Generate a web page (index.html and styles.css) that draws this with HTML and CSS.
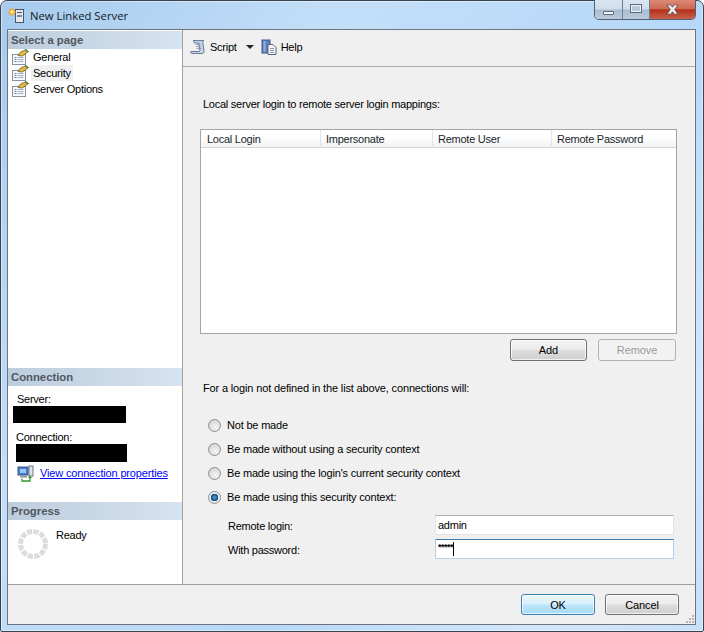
FILE: index.html
```html
<!DOCTYPE html>
<html lang="en">
<head>
<meta charset="utf-8">
<title>New Linked Server</title>
<link rel="stylesheet" href="styles.css">
</head>
<body>
<div class="window">
  <header class="titlebar">
    <svg class="title-icon" width="18" height="18" viewBox="0 0 18 18">
      <rect x="8.500" y="2.500" width="8" height="13" fill="#e4e8ee" stroke="#4a5566"/>
      <rect x="10" y="5" width="5" height="1" fill="#4a5566"/>
      <rect x="10" y="8" width="5" height="2" fill="#7e8aa0"/>
      <path d="M5 1l1 2 2-1-1 2 2 1-2 1 1 2-2-1-1 2-1-2-2 1 1-2-2-1 2-1-1-2 2 1z" fill="#f9c13a" stroke="#e8962a" stroke-width=".5"/>
      <circle cx="5" cy="5" r="1.300" fill="#fff3b0"/>
    </svg>
    <span class="title-text">New Linked Server</span>
    <div class="controls">
      <div class="ctl ctl-min"><span class="min-glyph"></span></div>
      <div class="ctl ctl-max"><span class="max-glyph"></span></div>
      <div class="ctl ctl-close">
        <svg width="15" height="11" viewBox="0 0 15 11"><path d="M2 .8h3.500l2 2.400 2-2.400H13l-3.300 4.700L13 10.200H9.500l-2-2.400-2 2.400H2l3.300-4.700z" fill="#eef0f4" stroke="#5a4a4a" stroke-width=".8"/></svg>
      </div>
    </div>
  </header>

  <div class="client">
    <div class="main">
      <aside class="sidebar">
        <section class="pages">
          <h2 class="group-head">Select a page</h2>
          <ul class="page-list">
            <li class="page-item">
              <svg class="page-icon" width="17" height="16" viewBox="0 0 17 16"><use href="#pg"/></svg>
              <span class="page-label">General</span>
            </li>
            <li class="page-item">
              <svg class="page-icon" width="17" height="16" viewBox="0 0 17 16"><use href="#pg"/></svg>
              <span class="page-label selected">Security</span>
            </li>
            <li class="page-item">
              <svg class="page-icon" width="17" height="16" viewBox="0 0 17 16"><use href="#pg"/></svg>
              <span class="page-label">Server Options</span>
            </li>
          </ul>
        </section>

        <section class="connection">
          <h2 class="group-head">Connection</h2>
          <div class="conn-label conn-label-1">Server:</div>
          <div class="redact redact-server"></div>
          <div class="conn-label conn-label-2">Connection:</div>
          <div class="redact redact-conn"></div>
          <div class="conn-link-row">
            <svg width="18" height="17" viewBox="0 0 18 17">
              <rect x="1" y="2" width="10" height="8" fill="#3f7fd8" stroke="#44557a"/>
              <rect x="3" y="4" width="6" height="4" fill="#9cc6f2"/>
              <rect x="3" y="10.500" width="7" height="2" fill="#8a94a8"/>
              <rect x="12" y="1" width="4" height="10" fill="#dfe3ea" stroke="#6a7488"/>
              <path d="M5 13.500v2.500h8v-4" fill="none" stroke="#2c9a2c" stroke-width="1.300"/>
              <path d="M11 13l2-2.500 2 2.500z" fill="#2c9a2c"/>
            </svg>
            <span class="link">View connection properties</span>
          </div>
        </section>

        <section class="progress">
          <h2 class="group-head">Progress</h2>
          <div class="progress-body">
            <svg class="spinner" width="32" height="32" viewBox="0 0 32 32">
              <circle cx="16" cy="16" r="12.500" fill="none" stroke="#dcdcdc" stroke-width="5" stroke-dasharray="5.200 1.350"/>
            </svg>
            <span class="ready">Ready</span>
          </div>
        </section>
      </aside>

      <div class="content">
        <div class="toolbar">
          <svg class="tb-icon" width="16" height="16" viewBox="0 0 16 16">
            <path d="M3 1.500h11c-1.500 1-1.500 2-1 3l1 7.500c.3 2-1 2.500-2 2.500H2c-1.200 0-1.700-1-1.200-2H9c1 0 1-.8.800-1.500L8.800 4H4.500L4 2.500C3.800 2 3.400 1.700 3 1.500z" fill="#c8d6e8" stroke="#5b7193" stroke-width=".9"/>
            <path d="M5.500 5.500h5M6 7.500h5M6.500 9.500h5" stroke="#7d93b2" stroke-width=".8"/>
          </svg>
          <span class="tb-text tb-script">Script</span>
          <span class="tb-arrow"></span>
          <svg class="tb-icon" width="16" height="16" viewBox="0 0 16 16">
            <rect x="1" y="1" width="8" height="13" fill="#5c7fb8" stroke="#3d5a8a"/>
            <rect x="2.500" y="2" width="2" height="11" fill="#8fb0de"/>
            <path d="M7 5.500h5l3 3v7H7z" fill="#f4f6f9" stroke="#56657d"/>
            <path d="M9 9.500h4M9 11.500h4M9 13.500h4" stroke="#8a96a8"/>
          </svg>
          <span class="tb-text">Help</span>
        </div>

        <div class="form">
          <p class="intro">Local server login to remote server login mappings:</p>

          <div class="listview">
            <div class="lv-head">
              <div class="lv-col lv-c1">Local Login</div>
              <div class="lv-col lv-c2">Impersonate</div>
              <div class="lv-col lv-c3">Remote User</div>
              <div class="lv-col lv-c4">Remote Password</div>
            </div>
          </div>

          <div class="list-buttons">
            <button class="btn btn-add" type="button">Add</button>
            <button class="btn btn-disabled" type="button">Remove</button>
          </div>

          <p class="notice">For a login not defined in the list above, connections will:</p>

          <div class="radios">
            <label class="radio-row"><span class="radio"></span>Not be made</label>
            <label class="radio-row"><span class="radio"></span>Be made without using a security context</label>
            <label class="radio-row"><span class="radio"></span>Be made using the login's current security context</label>
            <label class="radio-row"><span class="radio radio-on"></span>Be made using this security context:</label>
          </div>

          <div class="fields">
            <div class="field-row">
              <span class="field-label">Remote login:</span>
              <div class="input">admin</div>
            </div>
            <div class="field-row">
              <span class="field-label">With password:</span>
              <div class="input input-focus"><span class="pw">*****</span><span class="caret"></span></div>
            </div>
          </div>
        </div>
      </div>
    </div>

    <footer class="footer">
      <button class="btn btn-ok" type="button">OK</button>
      <button class="btn btn-cancel" type="button">Cancel</button>
      <svg class="grip" width="10" height="10" viewBox="0 0 10 10"><path d="M7 1h2v2H7zM4 4h2v2H4zM7 4h2v2H7zM1 7h2v2H1zM4 7h2v2H4zM7 7h2v2H7z" fill="#b8b8b8"/></svg>
    </footer>
  </div>
</div>

<svg class="defs" width="0" height="0">
  <defs>
    <g id="pg">
      <rect x=".5" y="5.500" width="13" height="10" fill="#f7f8fa" stroke="#8a8f98"/>
      <path d="M2.500 8.500h2M2.500 10.500h2M2.500 12.500h2" stroke="#6d7b92"/>
      <path d="M5.500 8.500h6M5.500 10.500h6M5.500 12.500h6" stroke="#9fb0ca"/>
      <path d="M6 6.500l2-3 6-3 2.500 2-6 4.500z" fill="#e9b93a" stroke="#4e4a28" stroke-width=".7"/>
      <path d="M13 1l3 2" stroke="#4c8f3f" stroke-width="1.200"/>
    </g>
  </defs>
</svg>
</body>
</html>
```

FILE: styles.css
```css
* { box-sizing: border-box; }
html, body { margin: 0; padding: 0; }
body {
  width: 704px;
  height: 632px;
  overflow: hidden;
  background: #fff;
  font-family: "Liberation Sans", Arial, sans-serif;
  font-size: 11px;
  letter-spacing: -.25px;
  color: #000;
}
.window {
  width: 704px;
  height: 632px;
  padding: 0 7px 6px 6px;
  display: flex;
  flex-direction: column;
  border: 1px solid #39424f;
  border-radius: 7px 7px 2px 2px;
  background: linear-gradient(125deg, #a6cbee 0%, #c3def8 30%, #b7d8f8 62%, #d2e7fb 85%, #c8e0f7 100%);
  box-shadow: inset 0 0 0 1px rgba(255,255,255,.45);
}
.titlebar {
  height: 28px;
  flex: none;
  display: flex;
  align-items: center;
}
.title-icon { flex: none; margin-top: 2px; }
.title-text {
  margin-left: 5px;
  margin-top: 1px;
  font-family: "Open Sans", sans-serif;
  font-size: 11.300px;
  letter-spacing: 0;
  color: #101820;
}
.controls {
  margin-left: auto;
  align-self: flex-start;
  margin-top: -1px;
  width: 102px;
  height: 20px;
  display: flex;
  border: 1px solid #4f5f74;
  border-top: 0;
  border-radius: 0 0 5px 5px;
  overflow: hidden;
}
.ctl { display: flex; align-items: center; justify-content: center; }
.ctl-min {
  width: 28px;
  border-right: 1px solid #6f7f93;
  background: linear-gradient(#d9e5f1 0, #cfdeec 48%, #a9bccf 52%, #bccbdc 100%);
}
.ctl-max {
  width: 27px;
  border-right: 1px solid #6f7f93;
  background: linear-gradient(#d9e5f1 0, #cfdeec 48%, #a9bccf 52%, #bccbdc 100%);
}
.ctl-close {
  flex: 1;
  background: linear-gradient(#dc8a76 0, #cf6a52 45%, #b4301b 52%, #c9614b 100%);
}
.min-glyph {
  width: 11px;
  height: 4px;
  margin-top: 6px;
  background: #f4f6f8;
  border: 1px solid #5c6a7c;
  border-radius: 1px;
}
.max-glyph {
  width: 12px;
  height: 9px;
  margin-top: -2px;
  background: #b9c9d9;
  border: 2px solid #eef2f6;
  outline: 1px solid #5c6a7c;
  outline-offset: -1px;
}
.client {
  flex: 1;
  display: flex;
  flex-direction: column;
  min-height: 0;
  background: #f0f0f0;
  border: 1px solid #6d7480;
}
.main {
  height: 555px;
  flex: none;
  display: flex;
  border-bottom: 1px solid #a0a0a0;
}
.sidebar {
  width: 175px;
  flex: none;
  background: #fff;
  border-right: 1px solid #a0a0a0;
  display: flex;
  flex-direction: column;
  padding-top: 1px;
}
.group-head {
  margin: 0;
  height: 18px;
  padding-left: 3px;
  font-size: 11.300px;
  font-weight: bold;
  letter-spacing: 0;
  line-height: 18px;
  color: #50565e;
  background: linear-gradient(90deg, #bccdde 0%, #d6e3f0 100%);
}
.page-list { list-style: none; margin: 0; padding: 0; }
.page-item {
  height: 16px;
  display: flex;
  align-items: center;
  padding-left: 4px;
}
.page-label { margin-left: 2px; padding: 0 2px; line-height: 16px; }
.page-label.selected { background: #f0f0f0; }
.page-icon { flex: none; }
.connection { margin-top: auto; }
.conn-label { margin: 7px 0 0 8px; line-height: 13px; }
.conn-label-1 { margin-left: 9px; }
.conn-label-2 { margin-top: 8px; }
.redact { background: #000; }
.redact-server { width: 113px; height: 17px; margin-left: 5px; }
.redact-conn { width: 111px; height: 18px; margin-left: 8px; }
.conn-link-row {
  display: flex;
  align-items: center;
  gap: 5px;
  margin: 2px 0 0 9px;
  height: 18px;
}
.link { color: #0000ff; text-decoration: underline; letter-spacing: -.16px; }
.progress { margin-top: 20px; height: 82px; }
.progress-body {
  display: flex;
  align-items: flex-start;
  padding: 8px 0 0 9px;
}
.spinner { flex: none; }
.ready { margin-left: 7px; margin-top: 1px; line-height: 13px; }
.content {
  flex: 1;
  min-width: 0;
  display: flex;
  flex-direction: column;
}
.toolbar {
  height: 37px;
  flex: none;
  display: flex;
  align-items: center;
  padding: 0 0 3px 7px;
  border-bottom: 1px solid #a8a8ae;
}
.tb-text { margin-left: 4px; }
.tb-script { margin-right: 9px; }
.tb-arrow {
  width: 0;
  height: 0;
  margin-right: 7px;
  border-left: 4px solid transparent;
  border-right: 4px solid transparent;
  border-top: 4px solid #222;
}
.tb-icon { flex: none; }
.form { padding: 0 18px 0 17px; }
.intro, .notice { margin: 0; line-height: 14px; padding-left: 3px; }
.intro { padding-top: 30px; }
.notice { letter-spacing: -.15px; }
.listview {
  margin-top: 18px;
  height: 205px;
  background: #fff;
  border: 1px solid #a5a5a5;
}
.lv-head {
  height: 18px;
  display: grid;
  grid-template-columns: 120px 112px 119px 1fr;
  border-bottom: 1px solid #d5d5d5;
  background: linear-gradient(#ffffff 0, #ffffff 40%, #f2f3f5 100%);
}
.lv-col {
  padding-left: 5px;
  line-height: 18px;
  color: #1a1f2a;
  border-right: 1px solid #e3e5e8;
}
.lv-c1 { padding-left: 6px; }
.lv-c4 { border-right: 0; }
.list-buttons {
  display: flex;
  justify-content: flex-end;
  gap: 11px;
  margin-top: 5px;
  padding-right: 1px;
}
.btn {
  height: 22px;
  padding: 0;
  font-family: inherit;
  font-size: 11px;
  letter-spacing: -.1px;
  color: #000;
  border: 1px solid #707070;
  border-radius: 3px;
  background: linear-gradient(#f3f3f3 0, #ebebeb 48%, #dddddd 52%, #cfcfcf 100%);
  box-shadow: inset 0 0 0 1px rgba(255,255,255,.7);
}
.btn-add { width: 77px; }
.btn-disabled {
  width: 78px;
  color: #9a9a9a;
  border-color: #adb2b5;
  background: #f2f2f2;
  box-shadow: none;
}
.notice { margin-top: 20px; }
.radios {
  display: flex;
  flex-direction: column;
  margin-top: 22px;
  gap: 8px;
}
.radio-row {
  height: 16px;
  display: flex;
  align-items: center;
  padding-left: 8px;
  letter-spacing: -.19px;
}
.radio {
  width: 13px;
  height: 13px;
  margin-right: 6px;
  border-radius: 50%;
  border: 1px solid #8e8f8f;
  background: radial-gradient(circle at 60% 65%, #f4f4f4 0, #dcdcdc 60%, #bdbdbd 100%);
}
.radio-on {
  background: radial-gradient(circle, #4d9fd8 0, #0f4f86 3.500px, #e8e8e8 4px, #f4f4f4 100%);
}
.fields {
  display: flex;
  flex-direction: column;
  gap: 4px;
  margin-top: 10px;
}
.field-row {
  height: 20px;
  display: flex;
  align-items: center;
  padding-left: 28px;
}
.field-label { width: 207px; flex: none; padding-top: 2px; }
.input {
  width: 239px;
  height: 20px;
  padding-left: 2px;
  line-height: 18px;
  background: #fff;
  border: 1px solid #e2e3ea;
  border-top-color: #abadb3;
  display: flex;
  align-items: center;
}
.input-focus {
  border-color: #b5cfe7;
  border-top-color: #3d7bad;
}
.pw { font-size: 9px; letter-spacing: -.5px; margin-top: -4px; font-weight: bold; }
.caret { width: 1px; height: 14px; background: #000; }
.footer {
  flex: 1;
  position: relative;
  display: flex;
  justify-content: flex-end;
  align-items: flex-start;
  gap: 10px;
  padding: 9px 16px 0 0;
}
.btn-ok {
  width: 74px;
  height: 21px;
  border-color: #3c7fb1;
  background: linear-gradient(#eaf6fd 0, #d9f0fc 48%, #bee6fd 52%, #a7d9f5 100%);
}
.btn-cancel { width: 74px; height: 21px; }
.grip { position: absolute; right: 0; bottom: 0; }
.defs { position: absolute; }
```
